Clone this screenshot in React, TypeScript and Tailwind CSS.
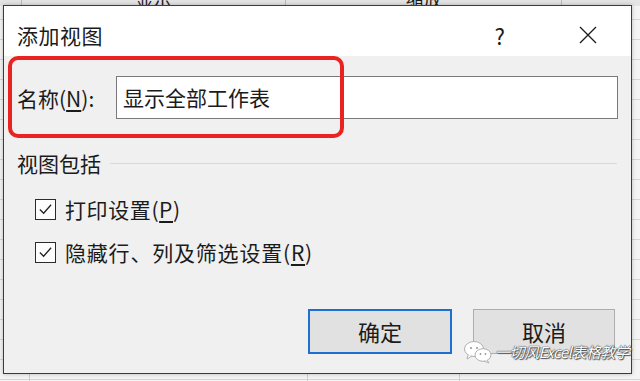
import React from "react";

const FONT = { fontFamily: '"Noto Sans CJK SC", "Noto Sans", sans-serif' };

function CheckBox() {
  return (
    <span className="flex h-[21px] w-[21px] items-center justify-center border-[1.5px] border-[#2b2b2b] bg-[#fdfdfd]">
      <svg width="15" height="15" viewBox="0 0 16 16" fill="none">
        <path d="M2.5 8.5 L6 12 L13.5 3.5" stroke="#222" strokeWidth="1.4" strokeLinecap="square" />
      </svg>
    </span>
  );
}

function WeChat() {
  return (
    <svg width="30" height="24" viewBox="0 0 30 24" fill="none">
      <ellipse cx="11" cy="9" rx="9.5" ry="7.5" fill="#fff" stroke="#b0b0b0" strokeWidth="1" />
      <path d="M5 15 L4 19 L9 16" fill="#fff" stroke="#b0b0b0" strokeWidth="1" />
      <circle cx="8" cy="8" r="1.1" fill="#999" />
      <circle cx="14" cy="8" r="1.1" fill="#999" />
      <ellipse cx="20" cy="15" rx="8" ry="6.3" fill="#fff" stroke="#b0b0b0" strokeWidth="1" />
      <path d="M24 20 L26 23 L21 21" fill="#fff" stroke="#b0b0b0" strokeWidth="1" />
      <circle cx="17.5" cy="14" r="0.9" fill="#999" />
      <circle cx="22.5" cy="14" r="0.9" fill="#999" />
    </svg>
  );
}

export default function App() {
  return (
    <div
      className="relative h-[381px] w-[640px] overflow-hidden bg-[#f4f4f4] text-[#1b1b1b]"
      style={FONT}
    >
      {/* spreadsheet grid behind */}
      <div className="absolute inset-0 bg-[repeating-linear-gradient(to_bottom,transparent_0px,transparent_19px,#d6d6d6_19px,#d6d6d6_20px)]" />
      {/* column header strip */}
      <div className="relative flex h-[6px] overflow-hidden bg-[#e4e4e4] text-[18px]">
        <div className="w-[22px] border-r border-[#b8b8b8]" />
        <div className="flex w-[264px] justify-center border-r border-[#b8b8b8]">
          <span className="-mt-[8px] block leading-[14px]">显示</span>
        </div>
        <div className="flex w-[276px] justify-center border-r border-[#b8b8b8]">
          <span className="-mt-[8px] block leading-[14px]">缩放</span>
        </div>
        <div className="flex-1" />
      </div>
      {/* bottom strip columns */}
      <div className="absolute bottom-0 left-0 flex h-[8px] w-full">
        <div className="w-[30px] border-r border-[#cfcfcf]" />
        <div className="w-[278px] border-r border-[#cfcfcf]" />
        <div className="w-[152px] border-r border-[#cfcfcf]" />
      </div>

      {/* dialog */}
      <div className="absolute left-[3px] top-[5px] flex h-[369px] w-[629px] flex-col border border-[#3c3c3c] bg-[#f0f0f0] shadow-[0_0_4px_rgba(0,0,0,0.25)]">
        {/* title bar */}
        <div className="flex h-[50px] items-start bg-white pt-[17px]">
          <span className="ml-[13px] text-[21px] leading-[24px] tracking-[0.5px]">添加视图</span>
          <div className="flex-1" />
          <span className="mr-[74px] text-[22px] leading-[24px]">?</span>
          <svg className="mr-[34px] mt-[3px]" width="18" height="18" viewBox="0 0 18 18">
            <path d="M1 1 L17 17 M17 1 L1 17" stroke="#1b1b1b" strokeWidth="1.3" />
          </svg>
        </div>

        {/* body */}
        <div className="relative flex flex-1 flex-col">
          {/* red highlight */}
          <div className="pointer-events-none absolute left-[4px] top-[0px] z-10 h-[82px] w-[336px] rounded-[10px] border-[4px] border-[#ea2320]" />

          <div className="mt-[20px] flex items-center">
            <span className="ml-[13px] w-[99px] text-[21px] leading-[24px]">
              名称(<span className="underline underline-offset-[3px]">N</span>):
            </span>
            <div className="flex h-[43px] w-[502px] items-center border border-[#7a7a7a] bg-white pl-[6px] text-[21px]">
              显示全部工作表
            </div>
          </div>

          <div className="mt-[32px] flex items-center">
            <span className="ml-[13px] text-[21px] leading-[24px]">视图包括</span>
            <div className="ml-[9px] mr-[14px] h-px flex-1 bg-[#d9d9d9]" />
          </div>

          <div className="ml-[31px] mt-[22px] flex items-center gap-[9px]">
            <CheckBox />
            <span className="text-[21px] leading-[24px] tracking-[0.6px]">
              打印设置(<span className="underline underline-offset-[3px]">P</span>)
            </span>
          </div>

          <div className="ml-[31px] mt-[19px] flex items-center gap-[9px]">
            <CheckBox />
            <span className="text-[21px] leading-[24px] tracking-[0.8px]">
              隐藏行、列及筛选设置(<span className="underline underline-offset-[3px]">R</span>)
            </span>
          </div>

          <div className="mt-[45px] flex justify-end gap-[21px] pr-[16px]">
            <div className="flex h-[45px] w-[144px] items-center justify-center border-2 border-[#1f6fd1] bg-[#e1e1e1] text-[22px]">
              确定
            </div>
            <div className="flex h-[45px] w-[142px] items-center justify-center border border-[#adadad] bg-[#e1e1e1] text-[22px]">
              取消
            </div>
          </div>
        </div>
      </div>

      {/* watermark */}
      <div className="absolute left-[463px] top-[340px] z-20 flex items-center">
        <WeChat />
        <span className="ml-[2px] text-[15px] italic leading-[20px] tracking-[-0.5px] text-white [text-shadow:0_0_1px_#333,0_0_1px_#333,1px_1px_1px_#555]">
          一切风Excel表格教学
        </span>
      </div>
    </div>
  );
}
